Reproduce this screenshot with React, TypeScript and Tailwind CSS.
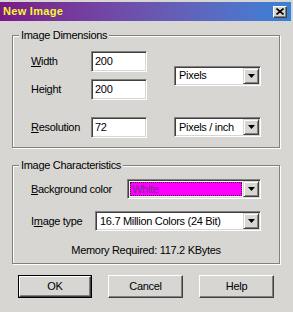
import React from "react";

const font = "font-['Liberation_Sans',Arial,sans-serif] text-[11px] tracking-[-0.3px] text-black";

const sunken =
  "border border-t-[#808080] border-l-[#808080] border-b-white border-r-white shadow-[inset_1px_1px_0_#404040,inset_-1px_-1px_0_#d7d6d3]";

function Mnemonic({ text, at }: { text: string; at: number }) {
  return (
    <span>
      {text.slice(0, at)}
      <span className="underline underline-offset-[1px]">{text[at]}</span>
      {text.slice(at + 1)}
    </span>
  );
}

function TextBox({ value }: { value: string }) {
  return (
    <div className={`h-[21px] w-[56px] bg-white px-[3px] pt-[3px] leading-[13px] ${sunken}`}>
      {value}
    </div>
  );
}

function DropButton() {
  return (
    <div className="flex h-full w-[16px] shrink-0 items-center justify-center border border-t-[#d7d6d3] border-l-[#d7d6d3] border-r-[#404040] border-b-[#404040] bg-[#d7d6d3] shadow-[inset_1px_1px_0_#fff,inset_-1px_-1px_0_#808080]">
      <svg width="7" height="4" viewBox="0 0 7 4">
        <path d="M0 0h7L3.5 4z" fill="#000" />
      </svg>
    </div>
  );
}

function Select({
  text,
  width,
  highlight = false,
}: {
  text: string;
  width: string;
  highlight?: boolean;
}) {
  return (
    <div className={`flex h-[20px] bg-white p-[1px] ${sunken} ${width}`}>
      <div className="flex flex-1 items-center p-[1px]">
        {highlight ? (
          <div className="flex h-full flex-1 items-center border border-dotted border-[#400040] bg-[#ff00ff] pl-[1px] text-[#7a2c96]">
            {text}
          </div>
        ) : (
          <div className="pl-[2px]">{text}</div>
        )}
      </div>
      <DropButton />
    </div>
  );
}

function Group({ title, children }: { title: string; children: React.ReactNode }) {
  return (
    <fieldset className="ml-[12px] w-[268px] border border-[#808080] shadow-[inset_1px_1px_0_#fff,1px_1px_0_#fff]">
      <legend className="ml-[6px] h-[13px] bg-[#d7d6d3] px-[2px] leading-[13px]">{title}</legend>
      {children}
    </fieldset>
  );
}

function Button({ label, isDefault = false }: { label: string; isDefault?: boolean }) {
  return (
    <div
      className={`flex h-[23px] items-center justify-center ${
        isDefault ? "w-[74px] border border-black" : "w-[75px]"
      }`}
    >
      <div className="flex h-full w-full items-center justify-center border border-t-white border-l-white border-r-[#404040] border-b-[#404040] shadow-[inset_-1px_-1px_0_#808080]">
        {label}
      </div>
    </div>
  );
}

export default function App() {
  return (
    <div className={`h-[312px] w-[293px] overflow-hidden bg-[#d7d6d3] pr-[2px] pt-[2px] ${font}`}>
      <div className="flex h-[19px] items-center bg-gradient-to-r from-[#7a1688] to-[#3482d8] pl-[3px] pr-[4px]">
        <span className="flex-1 text-[11px] font-bold tracking-[0.3px] text-[#f8f830]">New Image</span>
        <div className="flex h-[12px] w-[14px] items-center justify-center border border-t-white border-l-white border-r-[#404040] border-b-[#404040] bg-[#d7d6d3] shadow-[inset_-1px_-1px_0_#808080]">
          <svg width="8" height="7" viewBox="0 0 8 7">
            <path d="M0.5 0.5L7.5 6.5M7.5 0.5L0.5 6.5" stroke="#000" strokeWidth="1.6" />
          </svg>
        </div>
      </div>

      <div className="mt-[8px]">
        <Group title="Image Dimensions">
          <div className="pb-[9px] pl-[18px] pt-[9px]">
            <div className="flex items-center">
              <div className="flex flex-col gap-[7px]">
                <div className="flex items-center">
                  <div className="w-[60px]">
                    <Mnemonic text="Width" at={0} />
                  </div>
                  <TextBox value="200" />
                </div>
                <div className="flex items-center">
                  <div className="w-[60px]">
                    <Mnemonic text="Height" at={3} />
                  </div>
                  <TextBox value="200" />
                </div>
              </div>
              <div className="ml-[27px]">
                <Select text="Pixels" width="w-[87px]" />
              </div>
            </div>
            <div className="mt-[17px] flex items-start">
              <div className="flex items-center">
                <div className="w-[60px]">
                  <Mnemonic text="Resolution" at={0} />
                </div>
                <TextBox value="72" />
              </div>
              <div className="ml-[27px]">
                <Select text="Pixels / inch" width="w-[87px]" />
              </div>
            </div>
          </div>
        </Group>
      </div>

      <div className="mt-[11px]">
        <Group title="Image Characteristics">
          <div className="pb-[6px] pl-[18px] pt-[7px]">
            <div className="flex items-center">
              <div className="w-[96px]">
                <Mnemonic text="Background color" at={0} />
              </div>
              <Select text="White" width="w-[134px]" highlight />
            </div>
            <div className="mt-[12px] flex items-center">
              <div className="w-[64px]">
                <Mnemonic text="Image type" at={1} />
              </div>
              <Select text="16.7 Million Colors (24 Bit)" width="w-[166px]" />
            </div>
            <div className="mt-[13px] pr-[18px] text-center leading-[13px]">
              Memory Required: 117.2 KBytes
            </div>
          </div>
        </Group>
      </div>

      <div className="ml-[18px] mt-[11px] flex gap-[16px]">
        <Button label="OK" isDefault />
        <Button label="Cancel" />
        <Button label="Help" />
      </div>
    </div>
  );
}
